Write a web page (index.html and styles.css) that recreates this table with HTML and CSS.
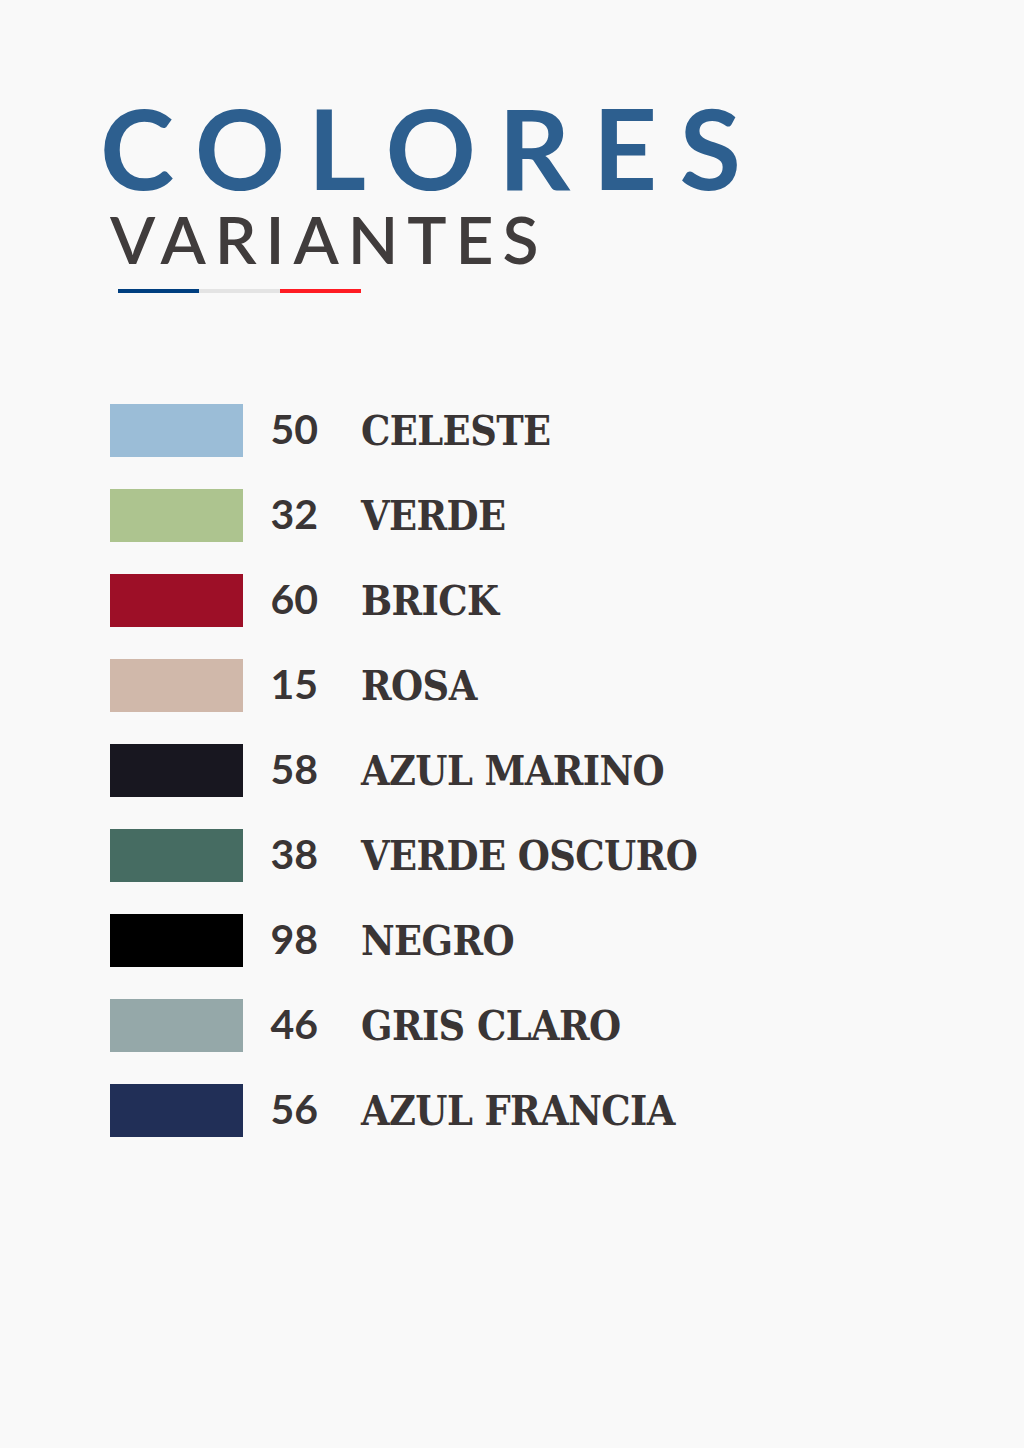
FILE: index.html
```html
<!DOCTYPE html>
<html lang="es">
<head>
<meta charset="utf-8">
<title>Colores Variantes</title>
<link rel="stylesheet" href="styles.css">
</head>
<body>
<main class="page">
  <header class="head">
    <h1 class="title">COLORES</h1>
    <h2 class="subtitle">VARIANTES</h2>
    <div class="flag"><span class="blue"></span><span class="white"></span><span class="red"></span></div>
  </header>
  <ul class="list">
    <li class="row"><span class="sw c-celeste"></span><span class="num">50</span><span class="name">CELESTE</span></li>
    <li class="row"><span class="sw c-verde"></span><span class="num">32</span><span class="name">VERDE</span></li>
    <li class="row"><span class="sw c-brick"></span><span class="num">60</span><span class="name">BRICK</span></li>
    <li class="row"><span class="sw c-rosa"></span><span class="num">15</span><span class="name">ROSA</span></li>
    <li class="row"><span class="sw c-marino"></span><span class="num">58</span><span class="name">AZUL MARINO</span></li>
    <li class="row"><span class="sw c-oscuro"></span><span class="num">38</span><span class="name">VERDE OSCURO</span></li>
    <li class="row"><span class="sw c-negro"></span><span class="num">98</span><span class="name">NEGRO</span></li>
    <li class="row"><span class="sw c-gris"></span><span class="num">46</span><span class="name">GRIS CLARO</span></li>
    <li class="row"><span class="sw c-francia"></span><span class="num">56</span><span class="name">AZUL FRANCIA</span></li>
  </ul>
</main>
</body>
</html>
```

FILE: styles.css
```css
html, body {
  margin: 0;
  padding: 0;
  background: #f9f9f9;
}
.page {
  width: 1024px;
  height: 1448px;
  box-sizing: border-box;
  padding: 99px 0 0 100px;
}
.head {
  display: flex;
  flex-direction: column;
  align-items: flex-start;
}
.title {
  margin: 0;
  font-family: "Lato", sans-serif;
  font-weight: 700;
  font-size: 112px;
  line-height: 96px;
  letter-spacing: 0.2em;
  color: #2d5f8f;
}
.subtitle {
  margin: 14px 0 0 10px;
  font-family: "Lato", sans-serif;
  font-weight: 600;
  font-size: 66px;
  line-height: 60px;
  letter-spacing: 0.135em;
  color: #403c3c;
}
.flag {
  display: flex;
  margin: 20px 0 0 18px;
  width: 243px;
  height: 4px;
}
.flag span { flex: 1; }
.flag .blue { background: #003f80; }
.flag .white { background: #e4e4e4; }
.flag .red { background: #ff1c24; }
.list {
  list-style: none;
  margin: 111px 0 0 10px;
  padding: 0;
  display: flex;
  flex-direction: column;
  gap: 32px;
}
.row {
  display: flex;
  align-items: center;
  height: 53px;
}
.sw {
  width: 133px;
  height: 53px;
  flex: none;
}
.num {
  width: 75px;
  text-align: right;
  font-family: "Lato", sans-serif;
  font-weight: 700;
  font-size: 41px;
  color: #3a3535;
  position: relative;
  top: -2px;
}
.name {
  margin-left: 43px;
  font-family: "DejaVu Serif Condensed", "DejaVu Serif", serif;
  font-weight: 700;
  font-size: 41px;
  color: #3a3535;
  letter-spacing: -0.6px;
}
.c-celeste { background: #9bbdd7; }
.c-verde { background: #adc48f; }
.c-brick { background: #9d0f27; }
.c-rosa { background: #d0b8aa; }
.c-marino { background: #181720; }
.c-oscuro { background: #466c62; }
.c-negro { background: #000000; }
.c-gris { background: #95a8a9; }
.c-francia { background: #212f57; }
```
